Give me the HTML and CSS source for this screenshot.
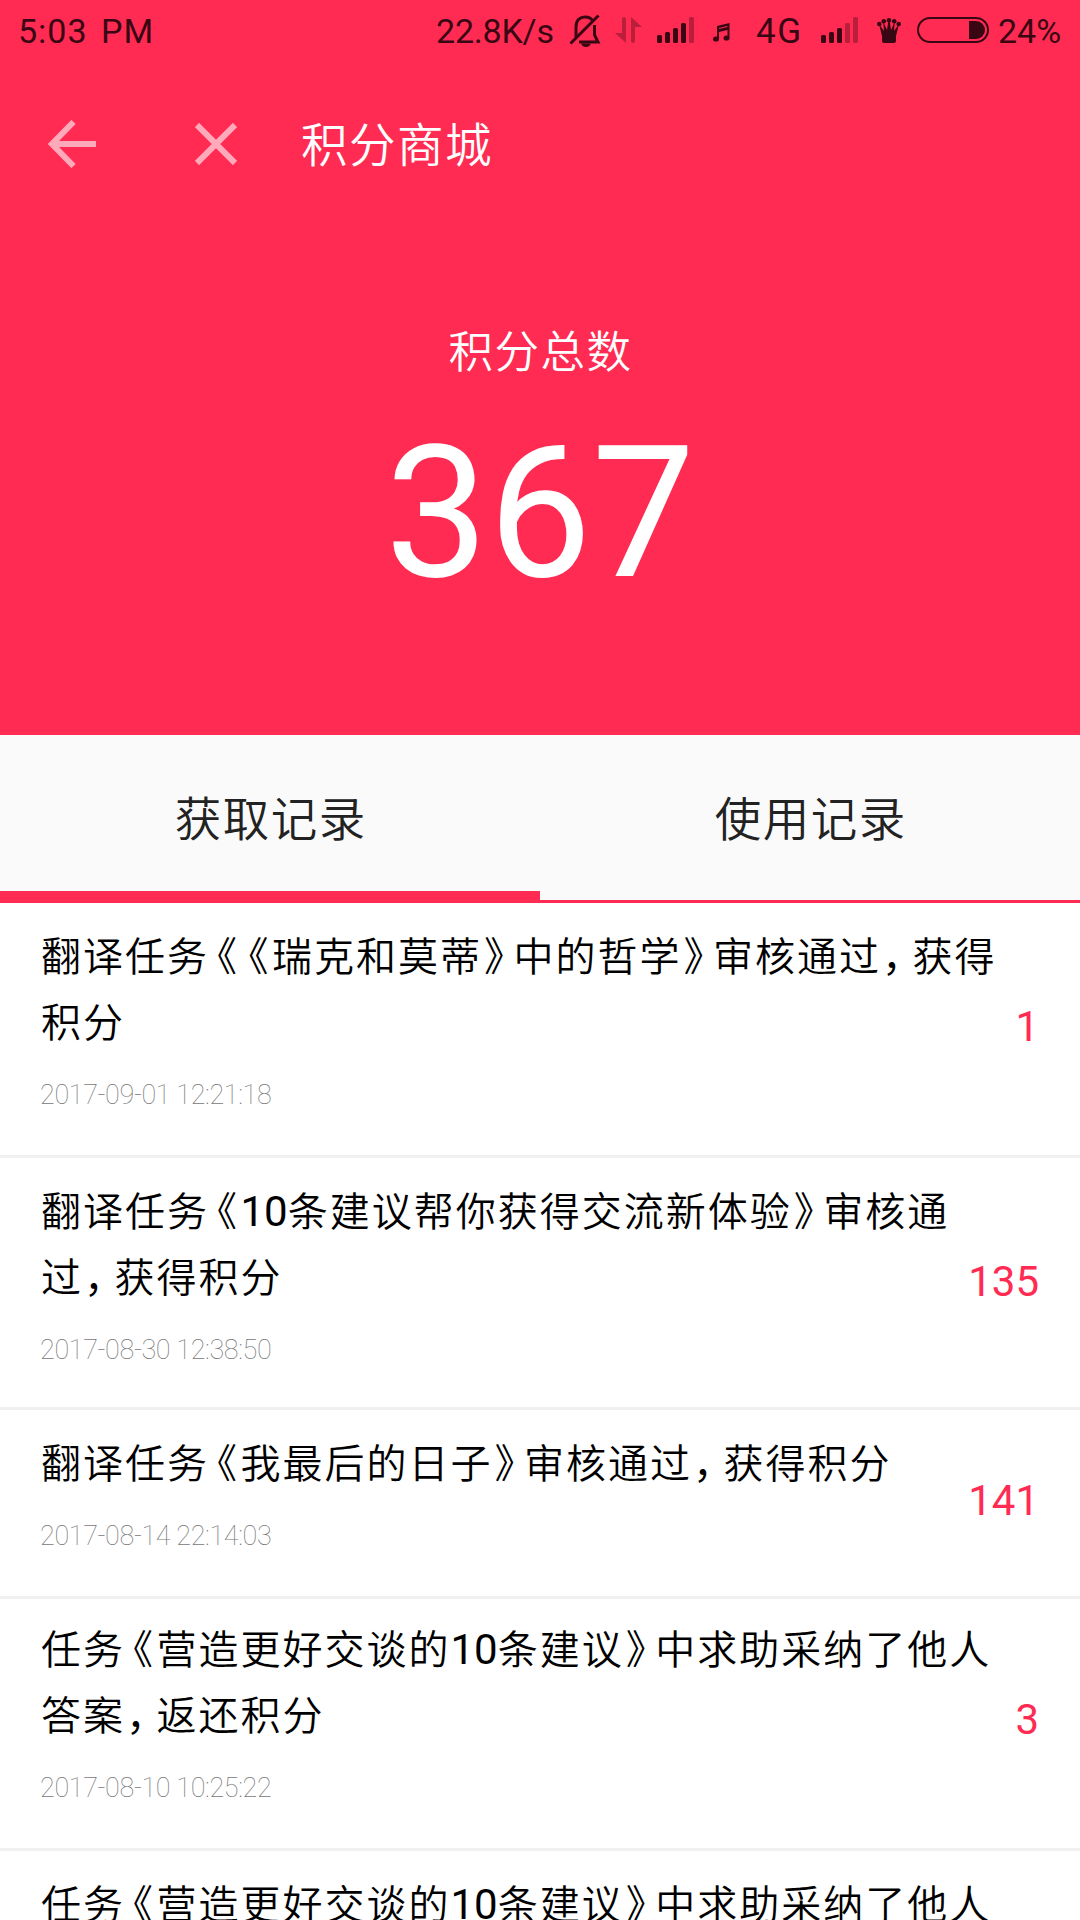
FILE: index.html
```html
<!DOCTYPE html>
<html lang="zh-CN">
<head>
<meta charset="utf-8">
<title>积分商城</title>
<link rel="stylesheet" href="styles.css">
</head>
<body>
<header class="hero">
  <div class="status">
    <span class="status-text clock">5:03 PM</span>
    <span class="status-text speed">22.8K/s</span>
    <svg class="icon-bell" width="32" height="34" viewBox="0 0 32 34" fill="none" stroke="#390713" stroke-width="3">
      <path d="M7 24V14C7 7 11 4 16 4C19 4 22 5 23.500 7.500M25.500 12V22L29 29H10" />
      <path d="M1.500 30.500L29.500 2.500" />
      <path d="M12 30.500H22C21 33 19.500 34 17 34C14.500 34 13 33 12 30.500Z" fill="#390713" stroke="none" />
    </svg>
    <svg class="icon-data" width="27" height="26" viewBox="0 0 27 26" fill="#390713" opacity=".35">
      <path d="M11 26L0 16H7V2Q7 0 9 0T11 2Z" /><path d="M16 0L27 10H20V24Q20 26 18 26T16 24Z" />
    </svg>
    <svg class="icon-signal" width="38" height="26" viewBox="0 0 38 26" fill="#390713">
      <rect x="0" y="18" width="5" height="8" rx="1.500" /><rect x="8" y="15" width="5" height="11" rx="1.500" />
      <rect x="16" y="11" width="5" height="15" rx="1.500" /><rect x="24" y="6" width="5" height="20" rx="1.500" />
      <rect x="32" y="0" width="5" height="26" rx="1.500" opacity=".35" />
    </svg>
    <svg class="icon-note" width="17" height="19" viewBox="0 0 17 19" fill="#390713">
      <path d="M4 3L16.500 0V15H14.500V7L6 9V16H4Z" /><path d="M6 5.500L14.500 3.500" stroke="#ff2b52" stroke-width="1" />
      <ellipse cx="3" cy="16" rx="3" ry="2.600" /><ellipse cx="13.500" cy="15" rx="3" ry="2.600" />
    </svg>
    <span class="status-text network">4G</span>
    <svg class="icon-signal2" width="38" height="26" viewBox="0 0 38 26" fill="#390713">
      <rect x="0" y="18" width="5" height="8" rx="1.500" /><rect x="8" y="15" width="5" height="11" rx="1.500" />
      <rect x="16" y="11" width="5" height="15" rx="1.500" /><rect x="24" y="6" width="5" height="20" rx="1.500" opacity=".35" />
      <rect x="32" y="0" width="5" height="26" rx="1.500" opacity=".35" />
    </svg>
    <svg class="icon-crown" width="24" height="25" viewBox="0 0 24 25" fill="#390713">
      <circle cx="2.300" cy="6" r="2.300" /><circle cx="6.800" cy="3.200" r="2.300" /><circle cx="12" cy="2.300" r="2.300" /><circle cx="17.200" cy="3.200" r="2.300" /><circle cx="21.700" cy="6" r="2.300" />
      <path d="M2 6L7 13L6.200 3.500L10 12L11.300 3H12.700L14 12L17.800 3.500L17 13L22 6L19 18V23Q19 25 16 25H8Q5 25 5 23V18Z" />
    </svg>
    <svg class="icon-battery" width="72" height="26" viewBox="0 0 72 26">
      <rect x="1" y="1" width="70" height="24" rx="12" fill="none" stroke="#390713" stroke-width="2" />
      <path d="M52 4H59A9 9 0 0 1 59 22H52Z" fill="#390713" />
    </svg>
    <span class="status-text percent">24%</span>
  </div>
  <nav class="toolbar">
    <svg class="back" width="48" height="48" viewBox="0 0 48 48" fill="none" stroke="#ffaaba" stroke-width="6">
      <path d="M25.500 2L4 24L25.500 46M5 24H48" />
    </svg>
    <svg class="close" width="42" height="42" viewBox="0 0 42 42" fill="none" stroke="#ffaaba" stroke-width="6">
      <path d="M2 2L40 40M40 2L2 40" />
    </svg>
    <h1 class="title">积分商城</h1>
  </nav>
  <div class="total-label">积分总数</div>
  <div class="total">367</div>
</header>
<div class="tabs">
  <div class="tab active">获取记录</div>
  <div class="tab">使用记录</div>
</div>
<main class="records">
  <article class="record first">
    <div class="info">
      <p class="desc">翻译任务<span class="mark open">《</span><span class="mark open">《</span>瑞克和莫蒂<span class="mark shut">》</span>中的哲学<span class="mark shut">》</span>审核通过<span class="comma">，</span>获得<br>积分</p>
      <time class="date">2017-09-01 12:21:18</time>
    </div>
    <div class="points">1</div>
  </article>
  <article class="record">
    <div class="info">
      <p class="desc">翻译任务<span class="mark open">《</span><span class="num">10</span>条建议帮你获得交流新体验<span class="mark shut">》</span>审核通<br>过<span class="comma">，</span>获得积分</p>
      <time class="date">2017-08-30 12:38:50</time>
    </div>
    <div class="points">135</div>
  </article>
  <article class="record short">
    <div class="info">
      <p class="desc">翻译任务<span class="mark open">《</span>我最后的日子<span class="mark shut">》</span>审核通过<span class="comma">，</span>获得积分</p>
      <time class="date">2017-08-14 22:14:03</time>
    </div>
    <div class="points">141</div>
  </article>
  <article class="record raised">
    <div class="info">
      <p class="desc">任务<span class="mark open">《</span>营造更好交谈的<span class="num">10</span>条建议<span class="mark shut">》</span>中求助采纳了他人<br>答案<span class="comma">，</span>返还积分</p>
      <time class="date">2017-08-10 10:25:22</time>
    </div>
    <div class="points">3</div>
  </article>
  <article class="record last">
    <div class="info">
      <p class="desc">任务<span class="mark open">《</span>营造更好交谈的<span class="num">10</span>条建议<span class="mark shut">》</span>中求助采纳了他人</p>
    </div>
  </article>
</main>
</body>
</html>
```
FILE: styles.css
```css
* { box-sizing: border-box; margin: 0; padding: 0; }
body {
  width: 1080px; height: 1920px; overflow: hidden;
  display: flex; flex-direction: column;
  background: #fff; color: #000;
  font-family: Roboto, "Noto Sans CJK SC", sans-serif;
}
svg { display: block; flex: none; }

.hero { height: 735px; flex: none; background: #ff2b52; color: #fff; }
.status { height: 60px; display: flex; align-items: center; }
.status-text { font-size: 34px; line-height: 60px; height: 60px; color: #390713; white-space: pre; flex: none; }
.clock { width: 418px; padding: 1px 0 0 18px; letter-spacing: 1px; word-spacing: 4px; }
.speed { width: 134px; padding-top: 1px; padding-left: 18px; letter-spacing: -0.2px; }
.icon-bell { margin-left: 17px; }
.icon-data { margin-left: 14px; }
.icon-signal { margin-left: 15px; }
.icon-note { margin: 5px 0 0 18px; }
.network { width: 65px; padding-top: 2px; margin-left: 26px; font-size: 35px; letter-spacing: 1.5px; }
.icon-signal2 { margin-left: 0; }
.icon-crown { margin-left: 18px; }
.icon-battery { margin-left: 16px; }
.percent { margin-left: 9px; padding-top: 1px; letter-spacing: 0; }

.toolbar { height: 168px; display: flex; align-items: center; padding-left: 48px; }
.close { margin-left: 99px; }
.title { margin: -4px 0 0 64px; font-size: 46.5px; font-weight: 350; line-height: 64px; letter-spacing: 1.5px; font-family: "Noto Sans CJK SC", sans-serif; }
.total-label {
  margin-top: 89px; height: 64px; line-height: 64px; text-align: center; padding-left: 1px;
  font-family: "Noto Sans CJK SC", sans-serif; font-size: 44.5px; font-weight: 350; letter-spacing: 1.5px;
}
.total { margin-top: 24px; height: 216px; line-height: 216px; font-size: 184px; text-align: center; }

.tabs { height: 168px; flex: none; display: flex; background: #fafafa; border-bottom: 3px solid #ff2b52; }
.tab {
  flex: 1; height: 165px; line-height: 162px; text-align: center; padding-left: 1.5px;
  font-family: "Noto Sans CJK SC", sans-serif; font-size: 46.5px; font-weight: 350; letter-spacing: 1.5px; color: #222;
}
.tab.active { border-bottom: 9px solid #ff2b52; }

.records { flex: 1; min-height: 0; overflow: hidden; }
.record {
  height: 252px; padding: 18px 40px 0 41px; border-bottom: 3px solid #f0f0f0;
  display: flex; justify-content: space-between;
}
.record.first { height: 255px; }
.record.short { height: 189px; }
.record.raised { padding-top: 15px; }
.record.last { height: 69px; border-bottom: 0; }
.desc {
  font-family: "Noto Sans CJK SC", sans-serif; font-size: 40px; font-weight: 350; line-height: 66px;
  letter-spacing: 2px; white-space: nowrap; text-spacing-trim: space-all;
}
.mark, .comma { display: inline-block; width: 31.5px; letter-spacing: 0; font-feature-settings: "halt"; }
.open { padding-left: 8px; }
.shut { padding-left: 2px; }
.comma { padding-left: 1px; font-weight: 400; }
.num { font-family: Roboto, sans-serif; font-weight: 400; font-size: 42px; letter-spacing: 0; line-height: 1; }
.date { display: block; margin: 26px 0 0 -1px; font-size: 27px; font-weight: 100; line-height: 32px; letter-spacing: -0.4px; color: #777; }
.points { font-size: 42px; line-height: 50px; color: #ff2b52; padding-top: 81px; margin-right: 1px; }
.short .points { padding-top: 48px; }
```
